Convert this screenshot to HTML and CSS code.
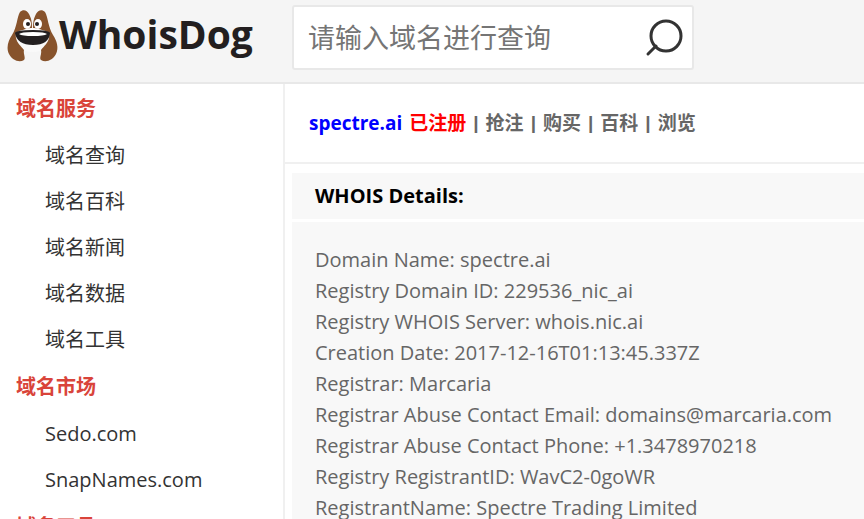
FILE: index.html
```html
<!DOCTYPE html>
<html lang="zh-CN">
<head>
    <meta charset="UTF-8">
    <meta name="viewport" content="width=device-width, initial-scale=1.0">
    <title>WhoisDog - spectre.ai</title>
    <link rel="stylesheet" href="styles.css">
</head>
<body>
    <header class="header">
        <a class="logo" href="#">
            <svg class="logo-dog" viewBox="0 0 52 54" aria-hidden="true">
                <path fill="#f9f9f9" d="M18 20 L33 20 L42 28 Q42 43 26 43 Q9 43 9 28 Z"/>
                <path fill="#87532c" d="M13 3 C16 0 20 1 22 5 C24 9 25 12 25 19 L16 21 C10 22 8 24 9 29 C10 34 14 37 17 41 C16 45 19 49 17 51 C12 54 5 51 2 45 C-1 39 1 32 5 26 C10 18 10 8 13 3 Z"/>
                <path fill="#87532c" d="M38 3 C35 0 31 1 29 5 C27 9 26 12 26 19 L35 21 C41 22 43 24 42 29 C41 34 37 37 34 41 C35 45 32 49 34 51 C39 54 46 51 49 45 C52 39 50 32 46 26 C41 18 41 8 38 3 Z"/>
                <ellipse cx="20" cy="15" rx="4" ry="5" fill="#fff"/>
                <ellipse cx="31" cy="15" rx="4" ry="5" fill="#fff"/>
                <path fill="#fff" d="M16 21 Q25 17 35 21 L35 23 L16 23 Z"/>
                <circle cx="21" cy="15" r="2" fill="#231f20"/>
                <circle cx="30" cy="15" r="2" fill="#231f20"/>
                <path fill="#231f20" d="M8 24 Q9 21 26 21 Q42 21 43 24 Q42 36 26 36 Q10 36 8 24 Z"/>
                <path fill="#fff" d="M12 25 Q14 23 26 23 Q38 23 40 25 Q37 27 26 27 Q15 27 12 25 Z"/>
            </svg>
            <span class="logo-text">WhoisDog</span>
        </a>
        <form class="search">
            <input type="text" name="domain" placeholder="请输入域名进行查询" aria-label="请输入域名进行查询">
            <button type="submit" aria-label="查询">
                <svg viewBox="0 0 40 40" aria-hidden="true">
                    <circle cx="22" cy="18" r="15"/>
                    <path d="M12 28 L4 36"/>
                </svg>
            </button>
        </form>
    </header>
    <div class="page">
        <nav class="sidebar">
            <h2>域名服务</h2>
            <ul>
                <li><a href="#">域名查询</a></li>
                <li><a href="#">域名百科</a></li>
                <li><a href="#">域名新闻</a></li>
                <li><a href="#">域名数据</a></li>
                <li><a href="#">域名工具</a></li>
            </ul>
            <h2>域名市场</h2>
            <ul>
                <li><a href="#">Sedo.com</a></li>
                <li><a href="#">SnapNames.com</a></li>
            </ul>
            <h2>域名工具</h2>
        </nav>
        <main class="content">
            <div class="domain-bar">
                <a class="domain" href="#">spectre.ai</a>
                <span class="status">已注册</span>
                <span class="sep">|</span>
                <a href="#">抢注</a>
                <span class="sep">|</span>
                <a href="#">购买</a>
                <span class="sep">|</span>
                <a href="#">百科</a>
                <span class="sep">|</span>
                <a href="#">浏览</a>
            </div>
            <section class="whois">
                <h3>WHOIS Details:</h3>
                <div class="whois-data">
                    <p>Domain Name: spectre.ai</p>
                    <p>Registry Domain ID: 229536_nic_ai</p>
                    <p>Registry WHOIS Server: whois.nic.ai</p>
                    <p>Creation Date: 2017-12-16T01:13:45.337Z</p>
                    <p>Registrar: Marcaria</p>
                    <p>Registrar Abuse Contact Email: domains@marcaria.com</p>
                    <p>Registrar Abuse Contact Phone: +1.3478970218</p>
                    <p>Registry RegistrantID: WavC2-0goWR</p>
                    <p>RegistrantName: Spectre Trading Limited</p>
                </div>
            </section>
        </main>
    </div>
</body>
</html>
```
FILE: styles.css
```css
* {
    box-sizing: border-box;
}

body {
    margin: 0;
    height: 100vh;
    overflow: hidden;
    display: flex;
    flex-direction: column;
    background: #fff;
    font-family: "Open Sans", "Noto Sans CJK SC", sans-serif;
    font-size: 20px;
    color: #666;
}

a {
    color: inherit;
    text-decoration: none;
}

h2,
h3,
p,
ul {
    margin: 0;
    padding: 0;
}

.header {
    display: flex;
    align-items: flex-start;
    flex-shrink: 0;
    padding: 5px 0 12px;
    background: #f5f5f5;
    border-bottom: 2px solid #e8e8e8;
}

.logo {
    display: flex;
    width: 292px;
    flex-shrink: 0;
    padding: 4px 0 0 7px;
}

.logo-dog {
    width: 52px;
    height: 54px;
}

.logo-text {
    font-size: 39px;
    font-weight: bold;
    line-height: 50px;
    color: #231f20;
}

.search {
    display: flex;
    align-items: center;
    width: 402px;
    height: 65px;
    background: #fff;
    border: 2px solid #e8e8e8;
    border-radius: 3px;
}

.search input {
    flex: 1;
    min-width: 0;
    padding: 0 0 0 14px;
    border: 0;
    outline: 0;
    background: none;
    font: inherit;
    font-size: 27px;
    color: #333;
}

.search input::placeholder {
    color: #757575;
}

.search button {
    margin-right: 8px;
    padding: 0;
    border: 0;
    background: none;
}

.search svg {
    display: block;
    width: 40px;
    height: 40px;
    fill: none;
    stroke: #333;
    stroke-width: 3;
    stroke-linecap: round;
}

.page {
    display: flex;
    flex: 1;
    min-height: 0;
}

.sidebar {
    width: 285px;
    flex-shrink: 0;
    padding-top: 1px;
    border-right: 2px solid #f0f0f0;
}

.sidebar h2 {
    padding-left: 16px;
    font-size: 20px;
    line-height: 48px;
    color: #d9443a;
}

.sidebar ul {
    list-style: none;
}

.sidebar li {
    padding-left: 45px;
    line-height: 46px;
    color: #333;
}

.content {
    flex: 1;
    min-width: 0;
}

.domain-bar {
    display: flex;
    gap: 7px;
    padding: 0 24px;
    border-bottom: 2px solid #f0f0f0;
    font-size: 19px;
    font-weight: bold;
    line-height: 78px;
}

.domain {
    color: #00f;
}

.status {
    color: #f00;
}

.sep {
    font-family: "Liberation Sans", sans-serif;
}

.whois {
    padding: 9px 0 0 7px;
}

.whois h3 {
    padding-left: 23px;
    background: #f8f8f8;
    font-size: 20px;
    line-height: 46px;
    color: #000;
}

.whois-data {
    margin-top: 3px;
    padding: 22px 0 22px 23px;
    background: #f8f8f8;
    line-height: 31px;
}
```
